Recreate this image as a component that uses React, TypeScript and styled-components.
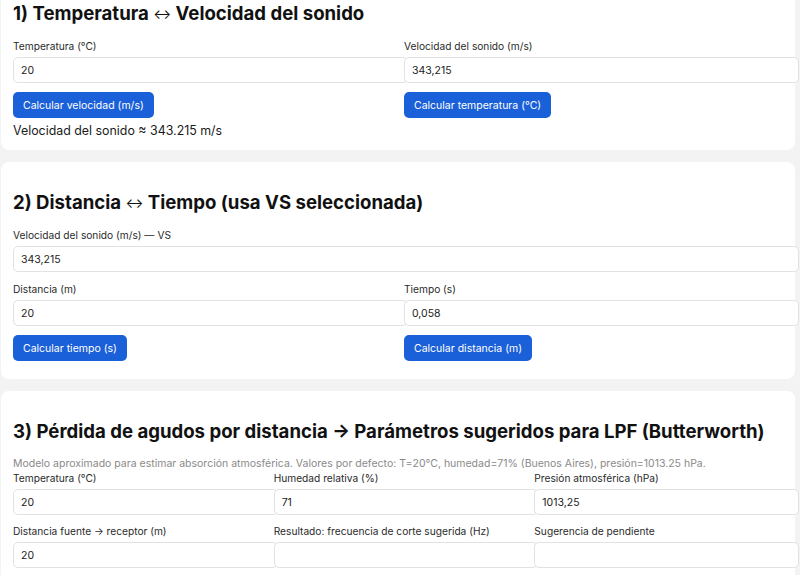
import React from "react";
import styled, { createGlobalStyle } from "styled-components";

const Global = createGlobalStyle`
  html, body { margin: 0; padding: 0; }
  body {
    background: #f3f3f3;
    font-family: Inter, "Noto Sans", "Liberation Sans", sans-serif;
    color: #1a1a1a;
    overflow: hidden;
  }
`;

const Page = styled.div`
  margin-top: -27px;
  padding: 0 5px 0 1px;
  display: flex;
  flex-direction: column;
  gap: 12px;
`;

const Card = styled.section`
  background: #ffffff;
  border-radius: 8px;
  padding: 12px;
`;

const Title = styled.h2`
  margin: 16px 0 14px;
  font-size: 18.6px;
  line-height: 24px;
  font-weight: 700;
  color: #111;
`;

const Arrow = styled.span`
  font-size: 0.72em;
  font-weight: 400;
  line-height: 0;
  vertical-align: 1px;
`;

const Grid = styled.div<{ $cols: number }>`
  display: grid;
  grid-template-columns: repeat(${(p) => p.$cols}, minmax(0, 1fr));
  column-gap: 12px;
`;

const Field = styled.div<{ $mb?: number }>`
  display: flex;
  flex-direction: column;
  align-self: stretch;
  margin-bottom: ${(p) => p.$mb ?? 9}px;
`;

const Label = styled.label`
  font-size: 10.2px;
  line-height: 14px;
  color: #2a2a2a;
  margin-bottom: 4px;
`;

const Input = styled.input`
  box-sizing: content-box;
  width: 100%;
  height: 24px;
  padding: 0 7px;
  border: 1px solid #e2e2e2;
  border-radius: 5px;
  background: #fff;
  font-family: inherit;
  font-size: 10.5px;
  color: #222;
  outline: none;
`;

const Col = styled.div`
  display: flex;
  flex-direction: column;
  align-items: flex-start;
`;

const Button = styled.button`
  height: 26px;
  padding: 0 10px;
  margin-bottom: 6px;
  border: none;
  border-radius: 5px;
  background: #1a60d8;
  color: #fff;
  font-family: inherit;
  font-size: 10.5px;
  cursor: pointer;
`;

const Result = styled.div`
  font-size: 12.4px;
  line-height: 14px;
  color: #1a1a1a;
`;

const Note = styled.div`
  font-size: 10.5px;
  line-height: 14px;
  color: #8a8a8a;
`;

export default function App() {
  return (
    <>
      <Global />
      <Page>
        <Card>
          <Title>
            1) Temperatura <Arrow>↔</Arrow> Velocidad del sonido
          </Title>
          <Grid $cols={2}>
            <Col>
              <Field>
                <Label>Temperatura (°C)</Label>
                <Input defaultValue="20" />
              </Field>
              <Button>Calcular velocidad (m/s)</Button>
            </Col>
            <Col>
              <Field>
                <Label>Velocidad del sonido (m/s)</Label>
                <Input defaultValue="343,215" />
              </Field>
              <Button>Calcular temperatura (°C)</Button>
            </Col>
          </Grid>
          <Result>Velocidad del sonido ≈ 343.215 m/s</Result>
        </Card>

        <Card>
          <Title>
            2) Distancia <Arrow>↔</Arrow> Tiempo (usa VS seleccionada)
          </Title>
          <Field $mb={10}>
            <Label>Velocidad del sonido (m/s) — VS</Label>
            <Input defaultValue="343,215" />
          </Field>
          <Grid $cols={2}>
            <Col>
              <Field>
                <Label>Distancia (m)</Label>
                <Input defaultValue="20" />
              </Field>
              <Button>Calcular tiempo (s)</Button>
            </Col>
            <Col>
              <Field>
                <Label>Tiempo (s)</Label>
                <Input defaultValue="0,058" />
              </Field>
              <Button>Calcular distancia (m)</Button>
            </Col>
          </Grid>
        </Card>

        <Card>
          <Title>3) Pérdida de agudos por distancia → Parámetros sugeridos para LPF (Butterworth)</Title>
          <Note>
            Modelo aproximado para estimar absorción atmosférica. Valores por defecto: T=20°C, humedad=71% (Buenos Aires), presión=1013.25 hPa.
          </Note>
          <Grid $cols={3}>
            <Field>
              <Label>Temperatura (°C)</Label>
              <Input defaultValue="20" />
            </Field>
            <Field>
              <Label>Humedad relativa (%)</Label>
              <Input defaultValue="71" />
            </Field>
            <Field>
              <Label>Presión atmosférica (hPa)</Label>
              <Input defaultValue="1013,25" />
            </Field>
            <Field>
              <Label>Distancia fuente → receptor (m)</Label>
              <Input defaultValue="20" />
            </Field>
            <Field>
              <Label>Resultado: frecuencia de corte sugerida (Hz)</Label>
              <Input defaultValue="" />
            </Field>
            <Field>
              <Label>Sugerencia de pendiente</Label>
              <Input defaultValue="" />
            </Field>
          </Grid>
        </Card>
      </Page>
    </>
  );
}
